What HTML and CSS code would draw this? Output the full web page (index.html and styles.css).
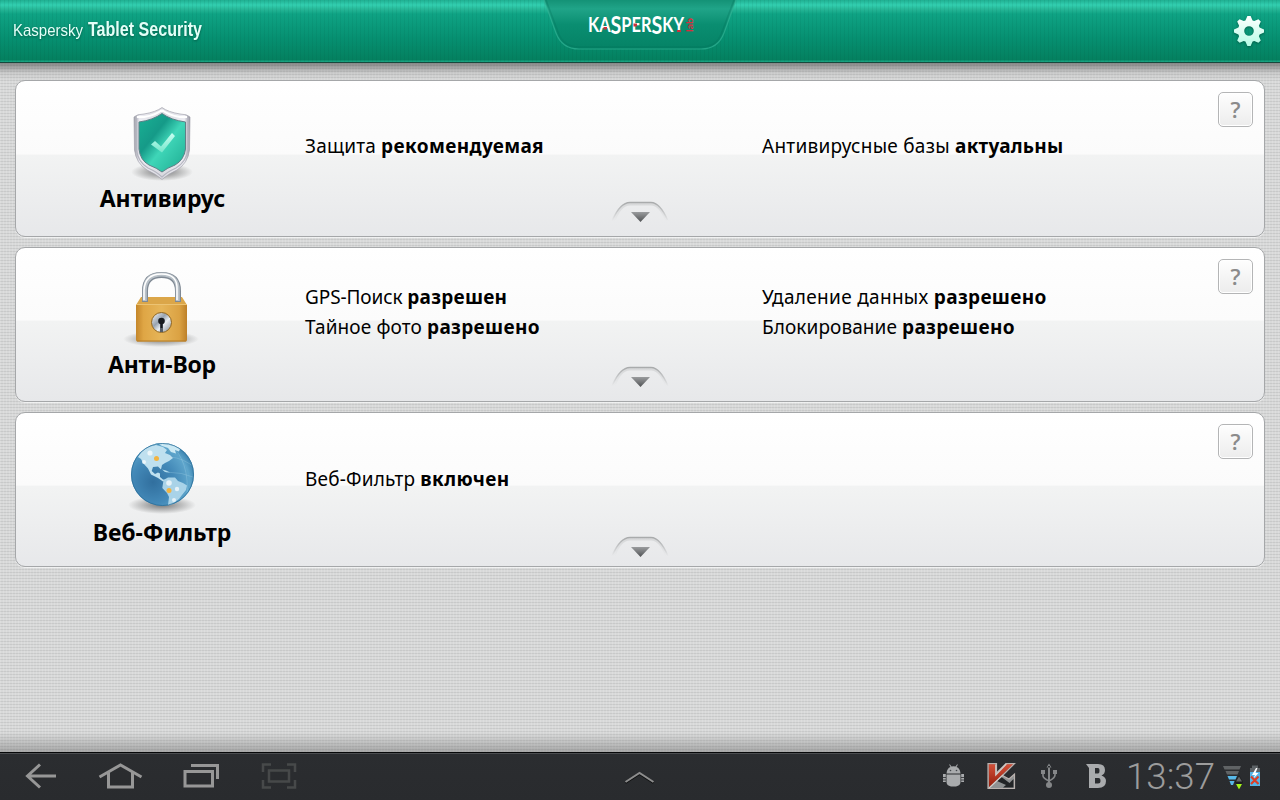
FILE: index.html
```html
<!DOCTYPE html>
<html lang="ru">
<head>
<meta charset="utf-8">
<title>Kaspersky Tablet Security</title>
<link rel="stylesheet" href="styles.css">
</head>
<body>
<header class="topbar">
  <svg class="title" width="300" height="61" viewBox="0 0 300 61">
    <text x="13" y="36" font-size="17" textLength="70" lengthAdjust="spacingAndGlyphs">Kaspersky</text>
    <text x="88" y="36" font-size="19.5" font-weight="700" textLength="114" lengthAdjust="spacingAndGlyphs">Tablet Security</text>
  </svg>
  <svg class="brand" width="196" height="54" viewBox="0 0 196 54">
    <defs><linearGradient id="tab" x2="0" y2="1"><stop offset="0" stop-color="#149276"/><stop offset=".18" stop-color="#20a488"/><stop offset=".5" stop-color="#0a8e71"/><stop offset="1" stop-color="#058265"/></linearGradient></defs>
    <path d="M2 0H194L182 33Q176 49 159 49H37Q20 49 14 33Z" fill="url(#tab)"/>
    <path d="M2 0L14 33Q20 49 37 49H159Q176 49 182 33L194 0" fill="none" stroke="#32b496" stroke-width="1.2" opacity=".7"/>
    <path d="M4 0L16 32Q21 47 37 47H159Q175 47 180 32L192 0" fill="none" stroke="#04705a" stroke-width="1.5" opacity=".3"/>
    <g class="wordmark">
      <text x="46" y="32" font-size="20" textLength="96" lengthAdjust="spacingAndGlyphs">KA<tspan dy="1.800" font-size="24">S</tspan><tspan dy="-1.800">PER</tspan><tspan dy="1.800" font-size="24">S</tspan><tspan dy="-1.800">KY</tspan></text>
      <text class="lab" transform="translate(151 32) rotate(-90)" font-size="9" textLength="14" lengthAdjust="spacingAndGlyphs">lab</text>
    </g>
    <path d="M61.500 27h3.500v2.500h-3.500zM91.500 23.500h3.500v3h-3.500zM135 30h4v2h-4z" fill="#c8323d"/>
  </svg>
  <svg class="gear" width="34" height="34" viewBox="-17 -17 34 34">
    <defs><linearGradient id="gearFill" x2="0" y2="1"><stop offset="0" stop-color="#fff"/><stop offset="1" stop-color="#b5fbe5"/></linearGradient></defs>
    <path fill="url(#gearFill)" fill-rule="evenodd" d="M-1.600-15H1.600L3.600-10.600 5.300-9.900 9.400-11.800 11.800-9.400 9.900-5.300 10.600-3.600 15-1.600V1.600L10.600 3.600 9.900 5.300 11.800 9.400 9.400 11.800 5.300 9.900 3.600 10.600 1.600 15H-1.600L-3.600 10.600-5.300 9.900-9.400 11.800-11.800 9.400-9.900 5.300-10.600 3.600-15 1.600V-1.600L-10.600-3.600-9.900-5.300-11.800-9.400-9.400-11.800-5.300-9.900-3.600-10.600ZM0-4.800A4.800 4.800 0 1 0 0 4.800 4.800 4.800 0 1 0 0-4.800Z"/>
  </svg>
</header>

<main class="cards">
  <section class="card card-av">
    <div class="module">
      <svg width="80" height="80" viewBox="122 102 80 80">
        <defs>
          <linearGradient id="rim"><stop offset="0" stop-color="#9a9ba5"/><stop offset=".1" stop-color="#ececf2"/><stop offset=".5" stop-color="#dadae0"/><stop offset=".9" stop-color="#ececf2"/><stop offset="1" stop-color="#92929e"/></linearGradient>
          <linearGradient id="jade" x2="1" y2="1"><stop offset="0" stop-color="#19b295"/><stop offset=".35" stop-color="#159a88"/><stop offset=".55" stop-color="#3fd6b8"/><stop offset="1" stop-color="#1dab91"/></linearGradient>
          <linearGradient id="tick" x2="0" y2="1"><stop offset="0" stop-color="#c9fff2"/><stop offset="1" stop-color="#74e6cb"/></linearGradient>
          <radialGradient id="shade"><stop offset="0" stop-color="#000" stop-opacity=".5"/><stop offset="1" stop-color="#000" stop-opacity="0"/></radialGradient>
        </defs>
        <ellipse cx="162" cy="172" rx="31" ry="9" fill="url(#shade)"/>
        <path d="M162 107.500Q168 112 180 114Q187 114 190 117L189.500 150Q188 163 177 170Q168 174 162 179.500Q156 174 147 170Q136 163 134.500 150L134 117Q137 114 144 114Q156 112 162 107.500Z" fill="url(#rim)" stroke="#a3a3ad" stroke-width=".7"/>
        <path d="M188 118V150Q186 162 176 168Q167 172 162 177Q157 172 148 168Q138 162 136.500 150V118" fill="none" stroke="#b5b5c0" stroke-width="1.200"/>
        <path d="M162 110Q168 115 180 117H187M162 110Q156 115 144 117H137" fill="none" stroke="#fff" stroke-width="1.800"/>
        <path d="M162 113.500Q171 120 185.500 122V149Q184 160 175 165Q167 168 162 172Q157 168 149 165Q140 160 139 149V122Q153 120 162 113.500Z" fill="url(#jade)" stroke="#5f8087"/>
        <path d="M151 144.500L155 141 161 146.500 172 133 175 136 162 152.500Z" fill="url(#tick)"/>
      </svg>
      <h2 class="name w-av">Антивирус</h2>
    </div>
    <div class="info"><p class="a1">Защита <b>рекомендуемая</b></p></div>
    <div class="info"><p class="a2">Антивирусные базы <b>актуальны</b></p></div>
    <button class="help">?</button>
    <svg class="expand" width="60" height="28" viewBox="0 0 60 28"><use href="#expander"/></svg>
  </section>

  <section class="card card-at">
    <div class="module">
      <svg width="80" height="80" viewBox="122 268 80 80">
        <defs>
          <linearGradient id="gold"><stop offset="0" stop-color="#c4862a"/><stop offset=".15" stop-color="#dfa645"/><stop offset=".5" stop-color="#e6b559"/><stop offset=".85" stop-color="#dba243"/><stop offset="1" stop-color="#bd8029"/></linearGradient>
          <linearGradient id="steel" x2="1" y2="1"><stop offset="0" stop-color="#fff"/><stop offset=".4" stop-color="#98a3af"/><stop offset=".6" stop-color="#e9eef2"/><stop offset="1" stop-color="#7c8591"/></linearGradient>
        </defs>
        <ellipse cx="161" cy="339" rx="38" ry="8" fill="url(#shade)"/>
        <path d="M141 297H182L187 305H136Z" fill="#dba649"/>
        <path d="M145 302V291Q145 275 161.500 275T178 291V302" fill="none" stroke="#7f8994" stroke-width="6"/>
        <path d="M144.800 301V291Q144.800 274.500 161.500 274.500T177.800 291V301" fill="none" stroke="#b9c1c8" stroke-width="4"/>
        <path d="M144 300V290Q145 274 161.500 274T177 290V300" fill="none" stroke="#fff" stroke-width="1.500"/>
        <path d="M136 304H187V340Q187 341.500 185 341.500H138Q136 341.500 136 340Z" fill="url(#gold)"/>
        <path d="M136 304.500H187" stroke="#ecc373"/><path d="M137 341H186" stroke="#b47a25"/>
        <circle cx="161.500" cy="322.500" r="10" fill="url(#steel)" stroke="#90651e"/>
        <path d="M160 324H163V332H160Z" fill="#555d67"/><circle cx="161.500" cy="321" r="3.300" fill="#171b20"/>
        <path d="M160.500 322H162.500V328H160.500Z" fill="#171b20"/>
      </svg>
      <h2 class="name w-at">Анти-Вор</h2>
    </div>
    <div class="info"><p class="b1">GPS-Поиск <b>разрешен</b></p><p class="b2">Тайное фото <b>разрешено</b></p></div>
    <div class="info"><p class="b3">Удаление данных <b>разрешено</b></p><p class="b4">Блокирование <b>разрешено</b></p></div>
    <button class="help">?</button>
    <svg class="expand" width="60" height="28" viewBox="0 0 60 28"><use href="#expander"/></svg>
  </section>

  <section class="card card-wf">
    <div class="module">
      <svg width="80" height="80" viewBox="122 437 80 80">
        <defs>
          <radialGradient id="sea" cx=".35" cy=".62" r=".68"><stop offset="0" stop-color="#316f9e"/><stop offset=".5" stop-color="#4389b8"/><stop offset=".85" stop-color="#5fa6cc"/><stop offset="1" stop-color="#3f86b2"/></radialGradient>
          <clipPath id="ball"><circle cx="162.500" cy="474.500" r="31.500"/></clipPath>
        </defs>
        <ellipse cx="162" cy="505" rx="34" ry="9" fill="url(#shade)"/>
        <circle cx="162.500" cy="474.500" r="31.500" fill="url(#sea)"/>
        <g clip-path="url(#ball)">
          <path d="M169 443Q190 460 187 498M179 446Q200 465 193 490M170 457Q184 458 195 468M166 472Q182 472 196 478" fill="none" stroke="#a6d2e6" stroke-width=".6" opacity=".5"/>
          <path d="M138 457L142 451 148 447 156 445 163 447 167 450 165 453 170 455 173 458 169 461 165 463 162 465 161 469.500 158 466.500 153 467 151.700 471 155 474 158 472.500 160 473.500 160 477 163 479.500 166 480 163 481.500 158 478 151 474.500 148 468.500 143 463 141 459Z" fill="#bfe0ef"/>
          <path d="M158 443.500L166 443 177 446 180 449 179 451.500 175 450 176 453.500 171 452 168 448 162 446Z" fill="#cbe9f4"/>
          <path d="M162 469.500L166 470.500 170 472.500 165 472ZM150 444L156 442 158 444 152 446Z" fill="#b2dbec"/>
          <path d="M163.500 480L168 477.500 175 477.500 178 481 183 483 187 485.500 186 490 182 495 179 499 175 502 171 505 168 505 169 497 167 493 162.300 488Z" fill="#a9d3e8"/>
          <g fill="#fff" opacity=".7"><circle cx="150" cy="453" r="2.600"/><circle cx="144" cy="462" r="2"/><circle cx="169" cy="483" r="2.800"/><circle cx="177" cy="489" r="2.200"/><circle cx="174" cy="500" r="2"/></g>
          <g fill="#f2b443"><circle cx="156.500" cy="458.500" r="2.500"/><circle cx="169" cy="490.500" r="2.500"/></g>
        </g>
        <circle cx="162.500" cy="474.500" r="31" fill="none" stroke="#286c97" opacity=".75"/>
      </svg>
      <h2 class="name w-wf">Веб-Фильтр</h2>
    </div>
    <div class="info"><p class="c1">Веб-Фильтр <b>включен</b></p></div>
    <div class="info"></div>
    <button class="help">?</button>
    <svg class="expand" width="60" height="28" viewBox="0 0 60 28">
      <defs>
        <linearGradient id="arc" x2="0" y2="1"><stop offset="0" stop-color="#a9abac"/><stop offset="1" stop-color="#a9abac" stop-opacity="0"/></linearGradient>
        <linearGradient id="arrow" x2="0" y2="1"><stop offset="0" stop-color="#9a9c9e"/><stop offset="1" stop-color="#505254"/></linearGradient>
        <g id="expander"><path d="M4 22Q10 5 20 5H41Q50 5 57 22" fill="none" stroke="url(#arc)" stroke-width="3" opacity=".3"/><path d="M2 22Q10 3.500 20 3.500H41Q50 3.500 58 22" fill="none" stroke="url(#arc)" stroke-width="1.400"/><path d="M21 13H40L30.500 23Z" fill="url(#arrow)"/></g>
      </defs>
      <use href="#expander"/>
    </svg>
  </section>
</main>

<footer class="sysbar">
  <svg width="320" height="48" viewBox="0 752 320 48" fill="none" stroke="#979797" stroke-width="3">
    <path d="M56 776H28M40 764.500L27.500 776 40 787.500"/>
    <path d="M99.500 777L120.500 765 141.500 777M108.500 772V787H132.500V772"/>
    <path d="M185 771.500H212.500V786H185ZM191 765.500H217.500V779"/>
    <g stroke="#47494a" stroke-width="2.500"><path d="M269 770.500H289V781.500H269ZM263 772V764.500H271M287 764.500H295V772M295 780V787.500H287M271 787.500H263V780"/></g>
  </svg>
  <svg width="40" height="48" viewBox="620 752 40 48"><path d="M625.500 783L639.500 774 653.500 783" fill="none" stroke="#0e0f10" stroke-width="2"/><path d="M625.500 782L639.500 773 653.500 782" fill="none" stroke="#8d8d8d" stroke-width="2"/></svg>
  <svg class="status" width="345" height="48" viewBox="935 752 345 48">
    <g fill="#a9abad">
      <path d="M946.500 773.500Q947 768 950.500 767L949 764.500 950 764.500 951.500 766.500Q953.500 766 955.500 766.500L957 764.500H958L956.500 767Q960 768 960.500 773.500ZM946.500 774.500H960.500V782Q960.500 785.500 956 786.500H951Q946.500 785.500 946.500 782ZM943 774H945.800V782H943ZM961.200 774H964V782H961.200Z"/>
      <path d="M1046.500 767.500H1051.500L1049 763.500ZM1048 766H1050V784H1048ZM1041 770H1045V774H1041ZM1053 770H1057V774H1053Z" fill="#858789"/>
      <circle cx="1049" cy="785" r="3" fill="#858789"/><path d="M1043 772V776Q1043 778 1049 781Q1055 778 1055 775V772" fill="none" stroke="#858789" stroke-width="1.600"/>
      <path fill-rule="evenodd" d="M1086 764H1098Q1105 764 1105 770Q1105 774 1101.500 775.500Q1106 777 1106 781Q1106 788 1098 788H1089V768ZM1095 768H1098Q1099.500 768 1099.500 771Q1099.500 773.500 1098 773.500H1095ZM1095 778H1098.500Q1100.500 778 1100.500 781Q1100.500 783.500 1098 783.500H1095Z"/>
    </g>
    <g fill="#43474b"><circle cx="950.500" cy="770.500" r=".8"/><circle cx="956.500" cy="770.500" r=".8"/></g>
    <path d="M943 777.500H946M961 777.500H964M943 780H946M961 780H964" stroke="#292b2e" stroke-width=".8"/>
    <linearGradient id="kred" x2="0" y2="1"><stop stop-color="#d35039"/><stop offset="1" stop-color="#931d0c"/></linearGradient>
    <path d="M988 763.500H996.500V773L1006 763.500H1014.500L1002.500 775.500L1009 779L1014.500 774V788.500H988Z" fill="#8f9192" stroke="#b9b1ae" stroke-width="1.200"/>
    <path d="M997 781L1001.500 777L1009.500 783L1013.500 779V787.500H1003L1006 785Z" fill="#222426"/>
    <path d="M988.800 764.300H995.500V775.500L1006.500 764.300H1013L989 787.500Z" fill="url(#kred)"/>
    <path d="M995.800 764.500V775L1006.300 764M989 788L1003 775" fill="none" stroke="#d0cbc8" stroke-width="1.200"/>
    <text class="clock" x="1126" y="788.500" font-size="36" textLength="89" lengthAdjust="spacingAndGlyphs">13:37</text>
    <path d="M1223 766H1241L1239.500 769.500H1224.500ZM1225.500 771H1239L1237.500 774.500H1227Z" fill="#606365"/>
    <path d="M1227.500 776H1237L1235.500 779.500H1229ZM1229.500 781H1234.500L1233 785H1231Z" fill="#58b9e9"/>
    <path d="M1239 775L1243 782 1239 790 1235 782Z" fill="#1c1d1f"/><path d="M1239 776.500L1242 781.500H1236Z" fill="#646767"/><path d="M1236 784H1242L1239 789.500Z" fill="#a4f51d"/>
    <path d="M1252 765.500H1258V768H1260V774H1250V768H1252Z" fill="#5d6266"/><path d="M1250 772H1260V786H1250Z" fill="#55b5e8"/>
    <path d="M1256 768L1252 775H1255L1253 779 1258.500 773H1255.500L1257.500 768Z" fill="#fff"/><path d="M1251 776.500L1258.500 784M1258.500 776.500L1251 784" stroke="#dc3e26" stroke-width="2.200"/>
  </svg>
</footer>
</body>
</html>
```
FILE: styles.css
```css
* { box-sizing: border-box; }
body {
  margin: 0;
  width: 1280px;
  height: 800px;
  overflow: hidden;
  display: flex;
  flex-direction: column;
  font-family: "Noto Sans", "Open Sans", sans-serif;
  color: #000;
}
svg { display: block; flex: none; }

.topbar {
  height: 63px;
  flex: none;
  display: grid;
  grid-template-columns: 1fr 196px 1fr;
  border-bottom: 1px solid #17483c;
  background:
    repeating-linear-gradient(90deg, rgba(0, 60, 45, .07) 0 1px, transparent 1px 4px),
    linear-gradient(#1faf91 0, #32cfb0 5px, #27b898 9px, #0fa384 14px, #069071 38px, #04805f 60px, #18a280 61px, #18a280 62px);
}
.title { font-family: "Liberation Sans Narrow", "Liberation Sans", sans-serif; fill: #e4fff8; filter: drop-shadow(0 1px 1px #04604a); }
.wordmark { font-family: Lato, sans-serif; font-weight: 700; font-kerning: none; fill: #fff; }
.wordmark .lab { fill: #d52f3d; }
.gear { justify-self: end; margin: 14px 14px 0 0; filter: drop-shadow(0 1px 1px #04604a); }

.cards {
  flex: 1;
  padding: 17px 15px 0;
  display: flex;
  flex-direction: column;
  gap: 10px;
  background:
    linear-gradient(rgba(50, 50, 50, .5), rgba(90, 90, 90, .12) 10px, transparent 18px, transparent 669px, rgba(90, 90, 90, .4) 689px),
    repeating-linear-gradient(90deg, rgba(255, 255, 255, .14) 0 1px, transparent 1px 3px),
    repeating-linear-gradient(#d8d9d9 0 2px, #c8c9c9 2px 3px);
}
.card {
  position: relative;
  flex: none;
  display: grid;
  grid-template-columns: 289px 457px 1fr;
  border: 1px solid #a5a7a9;
  border-radius: 10px;
  box-shadow: 0 1px 0 rgba(255, 255, 255, .6);
  background: linear-gradient(#fff 0, #fbfbfb 47%, #f2f3f3 48%, #e7e8ea 100%);
}
.card-av { height: 157px; }
.card-at { height: 155px; }
.card-wf { height: 155px; }
.module { display: flex; flex-direction: column; align-items: center; padding-left: 3px; }
.card-av .module { padding-top: 21px; }
.card-at .module { padding-top: 20px; }
.card-wf .module { padding-top: 24px; }
.name { margin: 0; font-size: 23px; line-height: 32px; font-weight: 700; white-space: nowrap; }
.w-av { padding-left: 1px; }
.w-at { letter-spacing: -.2px; }
.w-wf { letter-spacing: -.1px; line-height: 30px; }
.info { display: flex; flex-direction: column; }
.card-av .info { padding-top: 50px; }
.card-at .info { padding-top: 34px; }
.card-wf .info { padding-top: 51px; }
.info p { margin: 0; font-size: 19px; line-height: 30px; white-space: nowrap; }
.info b { letter-spacing: .33px; }
.a1 { letter-spacing: .2px; }
.a1 b { letter-spacing: .38px; }
.a2 { letter-spacing: .26px; }
.a2 b { letter-spacing: .22px; }
.b1 { letter-spacing: -.1px; }
.b1 b { letter-spacing: .25px; }
.b2 { letter-spacing: .13px; }
.b3 { letter-spacing: .31px; }
.b4 { letter-spacing: .08px; }
.c1 { letter-spacing: .18px; }
.c1 b { letter-spacing: .42px; }

.help {
  position: absolute;
  top: 11px;
  right: 11px;
  width: 35px;
  height: 35px;
  padding: 0 0 1px;
  border: 1px solid #b4b5b6;
  border-radius: 5px;
  background: linear-gradient(#fefefe, #ececec);
  box-shadow: inset 0 0 0 1px #fff;
  font: 600 22px/32px "Open Sans", "Noto Sans", sans-serif;
  color: #8b8b8b;
}
.expand { position: absolute; left: 594px; bottom: 9px; }
.card-wf .expand { bottom: 4px; }

.sysbar {
  height: 48px;
  flex: none;
  display: grid;
  grid-template-columns: 620px 1fr 345px;
  background: linear-gradient(#060708 0, #060708 1px, #4b4d50 1px, #4b4d50 2px, #2b2d30 2px, #292b2e);
}
.clock { font-family: Roboto, sans-serif; font-weight: 300; fill: #9c9c9c; }
```
